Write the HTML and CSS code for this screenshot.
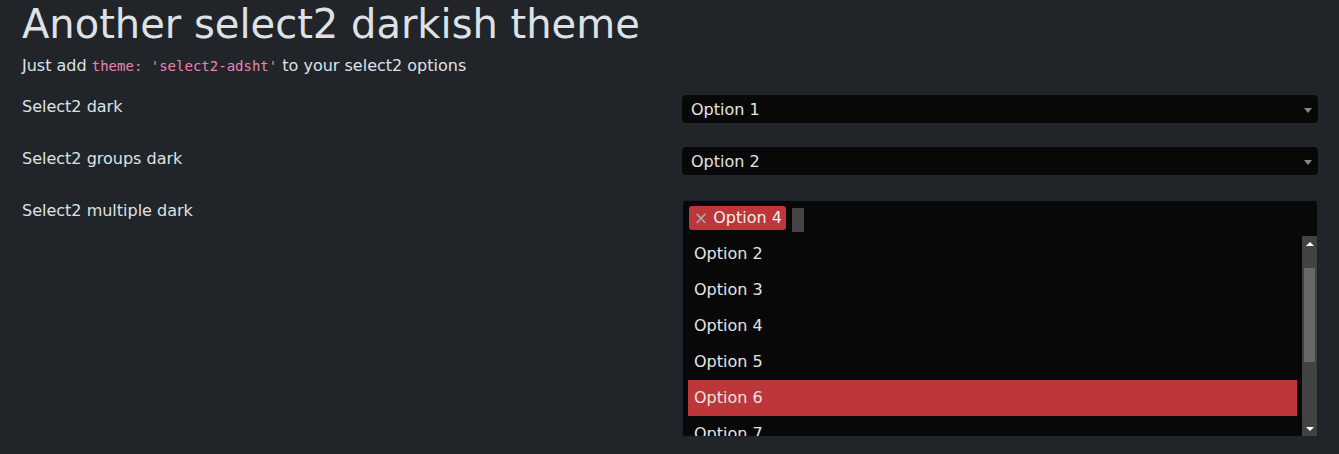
FILE: index.html
```html
<!DOCTYPE html>
<html lang="en">
<head>
<meta charset="utf-8">
<title>Another select2 darkish theme</title>
<link rel="stylesheet" href="styles.css">
</head>
<body>
<div class="page">
  <h1 class="title">Another select2 darkish theme</h1>
  <p class="lead">Just add <code>theme: 'select2-adsht'</code> to your select2 options</p>

  <div class="form-row">
    <label class="label">Select2 dark</label>
    <div class="field">
      <div class="single">
        <span class="single-text">Option 1</span>
        <span class="arrow"></span>
      </div>
    </div>
  </div>

  <div class="form-row">
    <label class="label">Select2 groups dark</label>
    <div class="field">
      <div class="single">
        <span class="single-text">Option 2</span>
        <span class="arrow"></span>
      </div>
    </div>
  </div>

  <div class="form-row">
    <label class="label">Select2 multiple dark</label>
    <div class="field">
      <div class="multi">
        <div class="multi-selection">
          <span class="tag"><span class="tag-x">×</span><span class="tag-text">Option 4</span></span>
          <span class="search"></span>
        </div>
        <div class="dropdown">
          <ul class="results">
            <li class="result">Option 2</li>
            <li class="result">Option 3</li>
            <li class="result">Option 4</li>
            <li class="result">Option 5</li>
            <li class="result highlighted">Option 6</li>
            <li class="result">Option 7</li>
          </ul>
          <div class="scrollbar">
            <div class="sb-btn"><span class="sb-up"></span></div>
            <div class="sb-track"><div class="sb-thumb"></div></div>
            <div class="sb-btn"><span class="sb-down"></span></div>
          </div>
        </div>
      </div>
    </div>
  </div>
</div>
</body>
</html>
```

FILE: styles.css
```css
* { box-sizing: border-box; }

html, body {
  margin: 0;
  padding: 0;
  background: #212529;
  height: 100%;
}

body {
  font-family: "DejaVu Sans", sans-serif;
  font-size: 16px;
  line-height: 1.5;
  color: #dee2e6;
}

.page {
  padding: 0 21px 0 22px;
}

.title {
  margin: 0 0 6px;
  font-size: 40px;
  font-weight: 400;
  line-height: 1.2;
  color: #dee2e6;
}

.lead {
  margin: 0 0 17px;
}

code {
  font-family: "DejaVu Sans Mono", monospace;
  font-size: 14px;
  color: #e685b5;
}

.form-row {
  display: grid;
  grid-template-columns: 1fr 1fr;
  column-gap: 24px;
  margin-bottom: 24px;
}

.label {
  display: block;
}

.single {
  display: flex;
  align-items: center;
  height: 28px;
  background: #080808;
  border: 1px solid #080808;
  border-radius: 4px;
  padding: 2px 8px 0;
  color: #e4e4e4;
}

.single-text {
  flex: 1;
  line-height: 24px;
}

.arrow {
  width: 0;
  height: 0;
  border-left: 4px solid transparent;
  border-right: 4px solid transparent;
  border-top: 5px solid #888;
  margin-right: -3px;
}

.multi {
  margin-top: 1px;
  background: #080808;
  border: 1px solid #1a2232;
  border-radius: 4px 4px 0 0;
}

.multi-selection {
  display: flex;
  align-items: center;
  gap: 6px;
  height: 35px;
  padding: 0 6px;
}

.tag {
  display: flex;
  align-items: center;
  height: 24px;
  margin-top: -1px;
  background: #bd363a;
  border-radius: 3px;
  padding: 0 4px 0 5px;
}

.tag-x {
  color: #a8a8a8;
  font-size: 17px;
  line-height: 24px;
  margin-right: 5px;
}

.tag-text {
  color: #eeeeee;
  line-height: 24px;
}

.search {
  display: block;
  width: 12px;
  height: 24px;
  background: #444444;
  margin-top: 2px;
}

.dropdown {
  display: flex;
  height: 200px;
  overflow: hidden;
}

.results {
  flex: 1;
  list-style: none;
  margin: 0;
  padding: 0 5px;
  overflow: hidden;
}

.result {
  height: 36px;
  padding: 6px;
  line-height: 24px;
  color: #e4e4e4;
}

.result.highlighted {
  background: #bd363a;
}

.scrollbar {
  width: 15px;
  display: flex;
  flex-direction: column;
  background: #424242;
}

.sb-btn {
  height: 15px;
  display: flex;
  align-items: center;
  justify-content: center;
}

.sb-up, .sb-down {
  width: 0;
  height: 0;
  border-left: 4px solid transparent;
  border-right: 4px solid transparent;
}

.sb-up { border-bottom: 4px solid #ffffff; }
.sb-down { border-top: 4px solid #ffffff; }

.sb-track {
  flex: 1;
  padding: 17px 2px 0;
}

.sb-thumb {
  height: 94px;
  background: #686868;
}
```
